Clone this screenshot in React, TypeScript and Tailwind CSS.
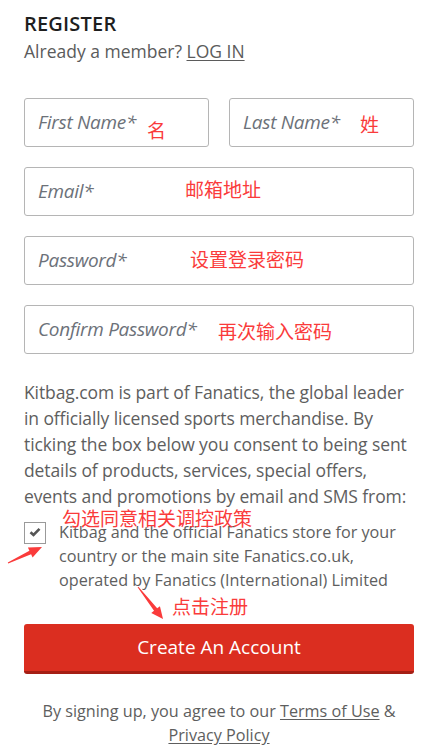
import React from "react";

const font = { fontFamily: '"Open Sans", "Noto Sans", sans-serif' };

function Field({ placeholder, className = "" }: { placeholder: string; className?: string }) {
  return (
    <div className={`h-[49px] rounded-[3px] border border-[#b5b5b5] bg-white flex items-center pl-[13px] ${className}`}>
      <span className="italic text-[19px] text-[#6c7179] tracking-[-0.3px]">{placeholder}</span>
    </div>
  );
}

function Note({ text, x, y }: { text: string; x: number; y: number }) {
  return (
    <span
      className="absolute text-[19px] leading-[19px] text-[#fa3b3b] whitespace-nowrap"
      style={{ left: x, top: y, fontFamily: '"Noto Sans CJK SC", "Noto Sans", sans-serif' }}
    >
      {text}
    </span>
  );
}

export default function App() {
  return (
    <div className="relative w-[443px] min-h-[747px] bg-white pl-6 pr-[29px] pt-[10px]" style={font}>
      <h1 className="text-[20px] leading-[28px] font-semibold text-[#1e1e1e] tracking-[0.2px]">REGISTER</h1>
      <p className="text-[17.5px] leading-[26px] text-[#5b5b5b]">
        Already a member? <span className="underline underline-offset-2">LOG IN</span>
      </p>

      <div className="mt-[34px] flex flex-col gap-[20px]">
        <div className="flex gap-[20px]">
          <Field placeholder="First Name*" className="flex-1" />
          <Field placeholder="Last Name*" className="flex-1" />
        </div>
        <Field placeholder="Email*" />
        <Field placeholder="Password*" />
        <Field placeholder="Confirm Password*" />
      </div>

      <p className="mt-[25px] -mr-[5px] text-[17.5px] leading-[26px] text-[#5e5e5e] tracking-[-0.1px]">
        Kitbag.com is part of Fanatics, the global leader in officially licensed sports merchandise. By ticking
        the box below you consent to being sent details of products, services, special offers, events and
        promotions by email and SMS from:
      </p>

      <div className="mt-[12px] flex gap-[13px]">
        <div className="mt-[1px] w-[22px] h-[22px] shrink-0 border border-[#9a9a9a] bg-white flex items-center justify-center">
          <svg width="12" height="10" viewBox="0 0 12 10" className="-mt-[2px]">
            <path d="M1.5 5.2 L4.5 8 L10.5 1.8" fill="none" stroke="#555" strokeWidth="2.6" />
          </svg>
        </div>
        <p className="-mt-[1px] text-[16.2px] leading-[24px] text-[#5e5e5e]">
          Kitbag and the official Fanatics store for your country or the main site Fanatics.co.uk, operated by
          Fanatics (International) Limited
        </p>
      </div>

      <button className="mt-[32px] w-full h-[50px] rounded-[3px] bg-[#db2e20] border-b-[3px] border-[#a51f15] text-white text-[19px]">
        Create An Account
      </button>

      <p className="mt-[25px] text-center text-[16.2px] leading-[24px] text-[#5e5e5e]">
        By signing up, you agree to our <span className="underline underline-offset-2">Terms of Use</span> &amp;{" "}
        <span className="underline underline-offset-2">Privacy Policy</span>
      </p>

      <Note text="名" x={147} y={120} />
      <Note text="姓" x={360} y={114} />
      <Note text="邮箱地址" x={185} y={179} />
      <Note text="设置登录密码" x={190} y={249} />
      <Note text="再次输入密码" x={218} y={321} />
      <Note text="勾选同意相关调控政策" x={62} y={508} />
      <Note text="点击注册" x={172} y={596} />

      <svg className="absolute left-0 top-0 pointer-events-none" width="443" height="747" viewBox="0 0 443 747">
        <polygon
          fill="#fa3b3b"
          points="8.21,563.45 31.10,554.35 32.59,557.51 42,547 27.91,547.57 29.40,550.73 7.79,562.55"
        />
        <polygon
          fill="#fa3b3b"
          points="137.61,587.31 154.03,610.77 151.28,612.93 163,619 159.94,606.15 157.19,608.31 138.39,586.69"
        />
      </svg>
    </div>
  );
}
